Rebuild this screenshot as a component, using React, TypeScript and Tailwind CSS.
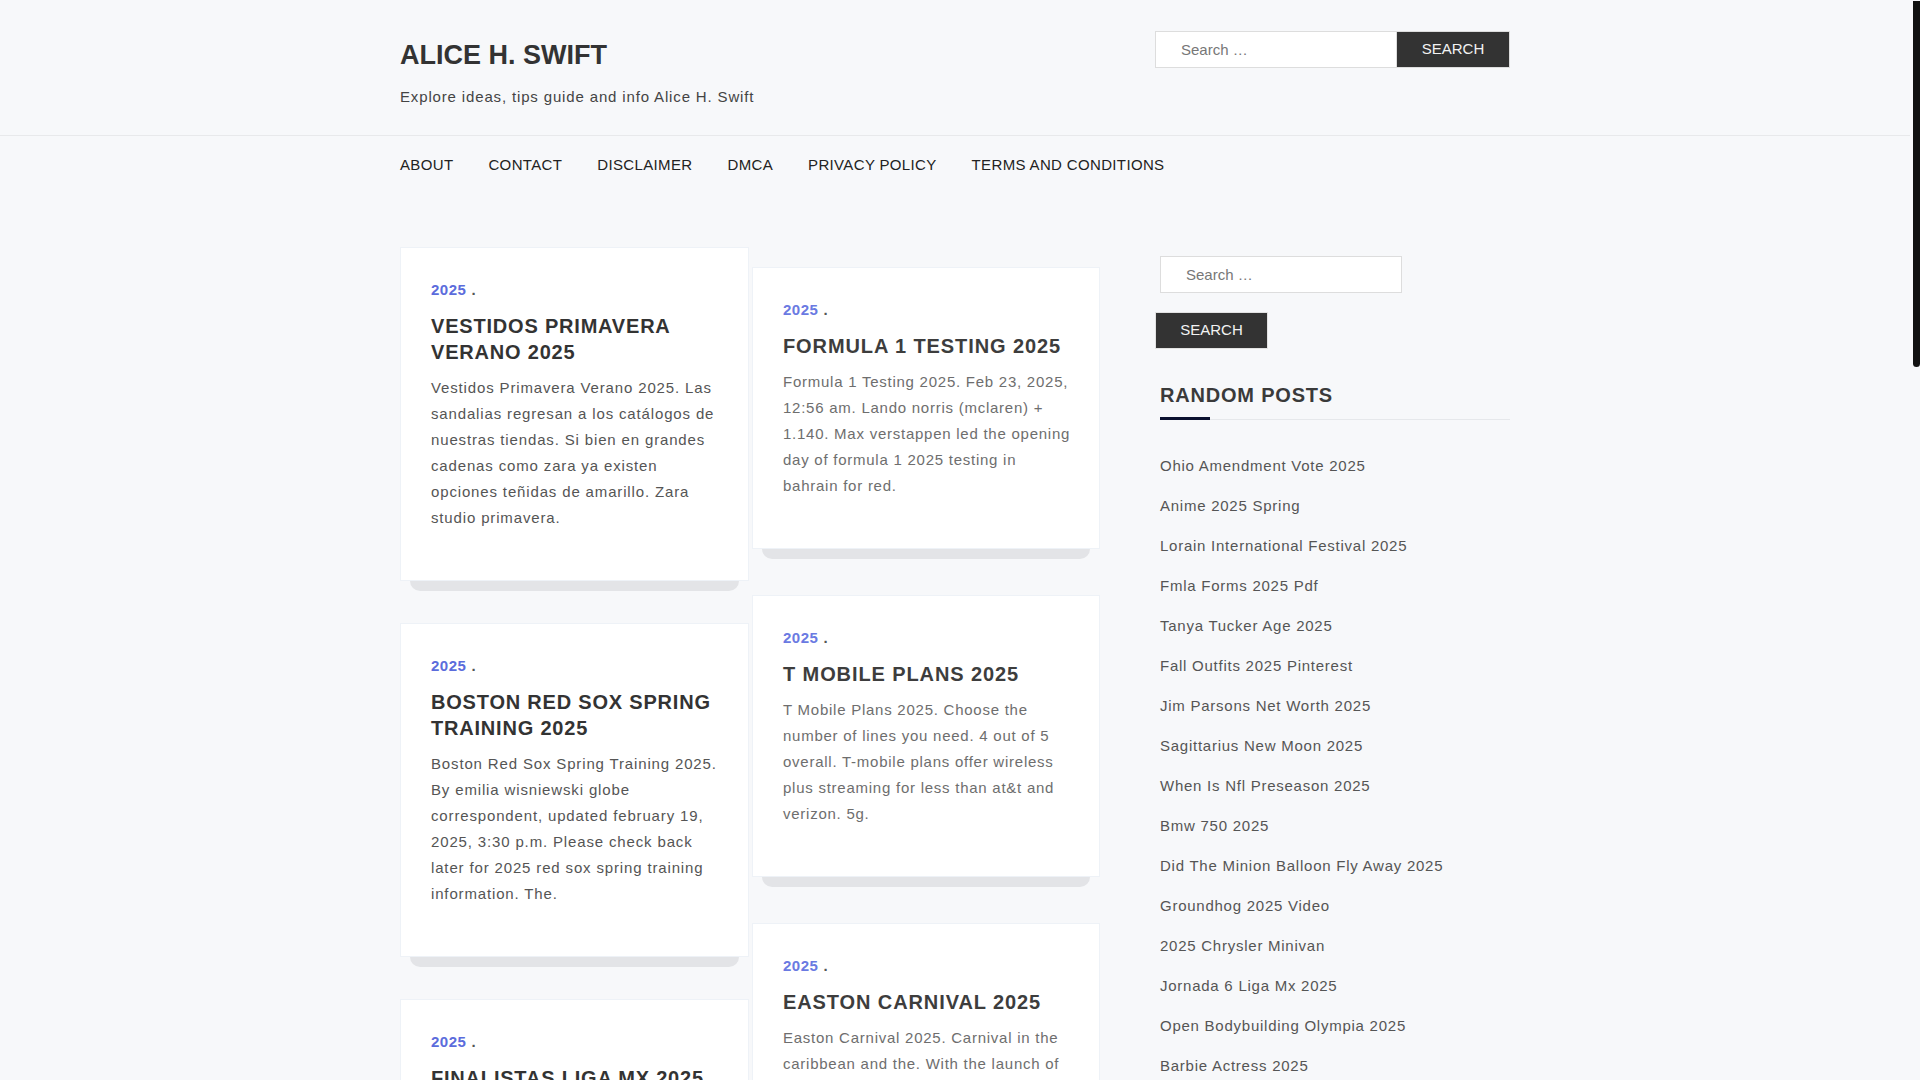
import React from 'react';

interface Post {
  title: string;
  excerpt: string;
}

const leftPosts: Post[] = [
  {
    title: 'Vestidos Primavera Verano 2025',
    excerpt:
      'Vestidos Primavera Verano 2025. Las sandalias regresan a los catálogos de nuestras tiendas. Si bien en grandes cadenas como zara ya existen opciones teñidas de amarillo. Zara studio primavera.'
  },
  {
    title: 'Boston Red Sox Spring Training 2025',
    excerpt:
      'Boston Red Sox Spring Training 2025. By emilia wisniewski globe correspondent, updated february 19, 2025, 3:30 p.m. Please check back later for 2025 red sox spring training information. The.'
  },
  {
    title: 'Finalistas Liga Mx 2025',
    excerpt:
      'Finalistas Liga Mx 2025. Conoce a los equipos que disputarán la gran final del torneo. Fechas, horarios y dónde ver los partidos en vivo.'
  }
];

const rightPosts: Post[] = [
  {
    title: 'Formula 1 Testing 2025',
    excerpt:
      'Formula 1 Testing 2025. Feb 23, 2025, 12:56 am. Lando norris (mclaren) + 1.140. Max verstappen led the opening day of formula 1 2025 testing in bahrain for red.'
  },
  {
    title: 'T Mobile Plans 2025',
    excerpt:
      'T Mobile Plans 2025. Choose the number of lines you need. 4 out of 5 overall. T-mobile plans offer wireless plus streaming for less than at&t and verizon. 5g.'
  },
  {
    title: 'Easton Carnival 2025',
    excerpt:
      'Easton Carnival 2025. Carnival in the caribbean and the. With the launch of the new season, the parade returns to the streets of easton this summer.'
  }
];

const randomPosts = [
  'Ohio Amendment Vote 2025',
  'Anime 2025 Spring',
  'Lorain International Festival 2025',
  'Fmla Forms 2025 Pdf',
  'Tanya Tucker Age 2025',
  'Fall Outfits 2025 Pinterest',
  'Jim Parsons Net Worth 2025',
  'Sagittarius New Moon 2025',
  'When Is Nfl Preseason 2025',
  'Bmw 750 2025',
  'Did The Minion Balloon Fly Away 2025',
  'Groundhog 2025 Video',
  '2025 Chrysler Minivan',
  'Jornada 6 Liga Mx 2025',
  'Open Bodybuilding Olympia 2025',
  'Barbie Actress 2025',
  'Nba Draft Order 2025'
];

const menu = ['About', 'Contact', 'Disclaimer', 'DMCA', 'Privacy Policy', 'Terms and Conditions'];

const PostCard: React.FC<{ post: Post; faded?: boolean }> = ({ post, faded }) => (
  <div className={faded ? 'mb-[36px]' : 'mb-[32px]'}>
    <article
      className={`bg-white border border-[#eef2f7] pl-[30px] pt-[30px] pb-[49px] ${
        faded ? 'pr-[26px]' : 'pr-[30px]'
      }`}
    >
      <div className="text-[15px] leading-[24px] font-bold tracking-[0.5px]">
        <span className={faded ? 'text-[#6a7ae2]' : 'text-[#5b6cdc]'}>2025</span>
        <span className="ml-[5px] text-[#555]">.</span>
      </div>
      <h2
        className={`mt-[11px] text-[20px] leading-[26px] font-bold uppercase ${
          faded ? 'text-[#3d3d3d] tracking-[0.9px]' : 'text-[#333] tracking-[0.8px]'
        }`}
      >
        {post.title}
      </h2>
      <p
        className={`mt-[10px] text-[15px] leading-[26px] ${
          faded ? 'text-[#6e6e6e] tracking-[0.75px]' : 'text-[#555] tracking-[0.85px]'
        }`}
      >
        {post.excerpt}
      </p>
    </article>
    <div className="mx-[10px] h-[10px] rounded-b-[10px] bg-[#e3e4e7]" />
  </div>
);

const SearchBox: React.FC = () => (
  <form className="flex" onSubmit={(e) => e.preventDefault()}>
    <input
      type="search"
      placeholder="Search …"
      className="w-[242px] h-[37px] bg-white border border-[#dddddd] pl-[25px] text-[15px] text-[#555] placeholder:text-[#777] outline-none"
    />
    <button
      type="submit"
      className="w-[113px] h-[37px] bg-[#333] text-[#f2f2f2] text-[15px] uppercase border border-[#dddddd] border-l-0"
    >
      Search
    </button>
  </form>
);

export default function App() {
  return (
    <div className="flex h-[1080px] w-full overflow-hidden bg-[#f7f8fa] font-['Liberation_Sans',Arial,sans-serif]">
      <div className="flex-1 min-w-0">
        {/* Header */}
        <header className="border-b border-[#e8e9eb]">
          <div className="w-[1110px] mx-auto pt-[31px] pb-[27px] flex justify-between items-start">
            <div className="pt-[8px]">
              <h1 className="text-[27px] leading-[32px] font-bold text-[#333]">ALICE H. SWIFT</h1>
              <p className="mt-[15px] text-[15px] leading-[22px] tracking-[0.85px] text-[#444]">
                Explore ideas, tips guide and info Alice H. Swift
              </p>
            </div>
            <SearchBox />
          </div>
        </header>

        {/* Navigation */}
        <nav className="w-[1110px] mx-auto pt-[19px]">
          <ul className="flex gap-[35px]">
            {menu.map((item) => (
              <li key={item} className="text-[15px] leading-[20px] uppercase tracking-[0.35px] text-[#222]">
                {item}
              </li>
            ))}
          </ul>
        </nav>

        {/* Main */}
        <main className="w-[1110px] mx-auto pt-[72px] flex">
          <div className="w-[700px] flex gap-[3px]">
            <div className="w-[349px]">
              {leftPosts.map((post) => (
                <PostCard key={post.title} post={post} />
              ))}
            </div>
            <div className="w-[348px] pt-[20px]">
              {rightPosts.map((post) => (
                <PostCard key={post.title} post={post} faded />
              ))}
            </div>
          </div>

          {/* Sidebar */}
          <aside className="ml-[60px] w-[350px] pt-[9px]">
            <form onSubmit={(e) => e.preventDefault()}>
              <input
                type="search"
                placeholder="Search …"
                className="block w-[242px] h-[37px] bg-white border border-[#dddddd] pl-[25px] text-[15px] text-[#555] placeholder:text-[#777] outline-none"
              />
              <button
                type="submit"
                className="block mt-[19px] -ml-[5px] w-[113px] h-[37px] bg-[#333] text-[#f2f2f2] text-[15px] uppercase border border-[#e2e2e2]"
              >
                Search
              </button>
            </form>

            <h3 className="mt-[33px] text-[20px] leading-[26px] font-bold uppercase tracking-[0.8px] text-[#3a3a3a]">
              Random Posts
            </h3>
            <div className="mt-[9px] flex items-end">
              <div className="w-[50px] h-[3px] bg-[#0b1130]" />
              <div className="flex-1 h-[1px] bg-[#e6e8eb]" />
            </div>
            <ul className="mt-[26px]">
              {randomPosts.map((title) => (
                <li key={title} className="h-[40px] text-[15px] leading-[40px] tracking-[0.75px] text-[#555]">
                  {title}
                </li>
              ))}
            </ul>
          </aside>
        </main>
      </div>

      {/* Scrollbar */}
      <div className="relative w-[10px] shrink-0 bg-[#f7f8fa]">
        <div className="absolute right-0 top-[1px] w-[7px] h-[366px] rounded-b-full bg-[#111]" />
      </div>
    </div>
  );
}
